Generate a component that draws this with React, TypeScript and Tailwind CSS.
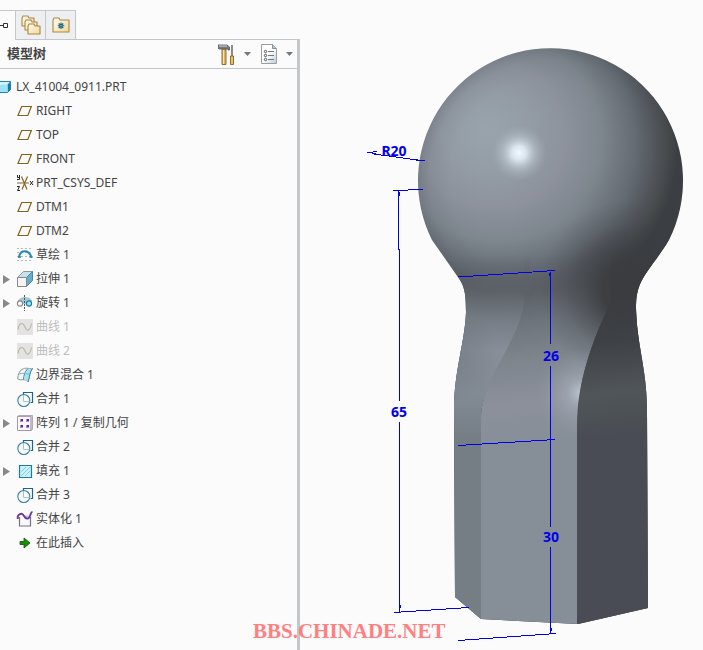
import type { ReactNode } from "react";

type IconName =
	| "plane"
	| "csys"
	| "sketch"
	| "extrude"
	| "revolve"
	| "curve"
	| "blend"
	| "merge"
	| "pattern"
	| "fill"
	| "solidify"
	| "insert";

type Feature = {
	icon: IconName;
	label: string;
	expandable?: boolean;
	suppressed?: boolean;
};

const features: Feature[] = [
	{ icon: "plane", label: "RIGHT" },
	{ icon: "plane", label: "TOP" },
	{ icon: "plane", label: "FRONT" },
	{ icon: "csys", label: "PRT_CSYS_DEF" },
	{ icon: "plane", label: "DTM1" },
	{ icon: "plane", label: "DTM2" },
	{ icon: "sketch", label: "草绘 1" },
	{ icon: "extrude", label: "拉伸 1", expandable: true },
	{ icon: "revolve", label: "旋转 1", expandable: true },
	{ icon: "curve", label: "曲线 1", suppressed: true },
	{ icon: "curve", label: "曲线 2", suppressed: true },
	{ icon: "blend", label: "边界混合 1" },
	{ icon: "merge", label: "合并 1" },
	{ icon: "pattern", label: "阵列 1 / 复制几何", expandable: true },
	{ icon: "merge", label: "合并 2" },
	{ icon: "fill", label: "填充 1", expandable: true },
	{ icon: "merge", label: "合并 3" },
	{ icon: "solidify", label: "实体化 1" },
	{ icon: "insert", label: "在此插入" },
];

const glyphs: Record<IconName, ReactNode> = {
	plane: <path d="M4.7 3.5h9.6l-3.5 9H1z" fill="none" stroke="#80601f" strokeWidth="1.2" />,
	csys: (
		<>
			<path d="M0 8h12M4.500 1.500l5.500 13M10.500 1.500l-5.500 13" stroke="#8a6428" strokeWidth="1.200" />
			<g stroke="#222" strokeWidth="1" fill="none">
				<path d="M.5 0v2.500h2M2.500 0v4.500H0M0 11.500h2.500L.5 15.500H3M13 6l3 4M16 6l-3 4" />
			</g>
		</>
	),
	sketch: (
		<>
			<path d="M.5 1.500h15M.5 5.500h15M.5 9.500h15M.5 13.500h15" stroke="#777" strokeDasharray="1 3" />
			<path d="M2 10.500C3 2 12 2 14.500 10.500" fill="none" stroke="#238bb5" strokeWidth="2" />
			<path d="M1 10h3M12.500 10h3" stroke="#238bb5" strokeWidth="1.500" />
		</>
	),
	extrude: (
		<>
			<path d="M.5 6.500L6.500.5h9l-6 6z" fill="#c5e3ed" stroke="#8b979d" />
			<path d="M9.500 6.500l6-6v9l-6 6z" fill="#65aeca" stroke="#458ba5" />
			<path d="M.5 6.500h9v9h-9z" fill="#f4f4f4" stroke="#888" />
		</>
	),
	revolve: (
		<>
			<path d="M1.500 6C3 1.500 13 1.500 14.500 6l-4 3h-5z" fill="#a7ccd8" />
			<path d="M1.500 6C3 1.500 13 1.500 14.500 6" fill="none" stroke="#9fb6be" />
			<path d="M7.500 0v16" stroke="#555" strokeDasharray="2 1" />
			<circle cx="3" cy="8.500" r="2.600" fill="#fafafa" stroke="#888" strokeWidth="1.100" />
			<circle cx="12" cy="8.500" r="2.600" fill="#8ce2f7" stroke="#177fa3" strokeWidth="1.100" />
		</>
	),
	curve: (
		<>
			<path d="M0 0h16v16H0z" fill="#e3e3e3" />
			<path d="M1 10.500C2 3 6 3 8 8s5 4 6.500-3.500" fill="none" stroke="#bdb9a0" strokeWidth="1.200" />
		</>
	),
	blend: (
		<>
			<path d="M5 2.500C9 0 11 2 15.500 1.500 12.500 5 13 9 11 15 9 11 4 14 .7 12 1 7 2 4.500 5 2.500z" fill="#eef8fb" stroke="#8d9499" />
			<path d="M11 2C8.500 5 8 8 7.500 12.500L11 15c2-6 1.500-10 4.500-13.500z" fill="#a6e2f3" />
			<path d="M15.500 1.500C12.500 5 13 9 11 15M10.500 2C7.500 5 7 8 6.500 12.500" fill="none" stroke="#2f86a8" />
			<path d="M1.500 7.500c4-2.500 7 0 11-.5" fill="none" stroke="#8aa7b2" />
		</>
	),
	merge: (
		<>
			<path d="M6.500 3.500V1.500h9v10h-2" fill="none" stroke="#176887" strokeWidth="1.200" />
			<circle cx="6.800" cy="9.500" r="6" fill="#f7fbfc" stroke="#3a7f9b" strokeWidth="1.100" />
			<path d="M6.500 4v6.500h6" fill="none" stroke="#a9c2cc" />
		</>
	),
	pattern: (
		<>
			<path d="M.5 1.500h13.500v14H.5z" fill="#faf8fc" stroke="#a29aac" />
			<path d="M.5 1.500l1.500-1h13.500v14l-1.500 1v-14z" fill="#d8d4df" stroke="#a29aac" strokeWidth="0.800" />
			<path d="M3 4h3v3H3zM9 4h3v3H9zM3 10h3v3H3zM9 10h3v3H9z" fill="#a98cc8" />
			<path d="M4 4h2v2H4zM10 4h2v2h-2zM4 10h2v2H4zM10 10h2v2h-2z" fill="#5b2a90" />
		</>
	),
	fill: (
		<>
			<path d="M2.500 2.500h12v12h-12z" fill="#c4f3fb" stroke="#23799b" strokeWidth="1.200" />
			<path d="M4 9l5-5M4 13l9-9M8 13l5-5" stroke="#83bed0" strokeWidth="0.800" />
		</>
	),
	solidify: (
		<>
			<path d="M2.500 6v9h11V6" fill="#faf8fc" stroke="#777083" strokeWidth="1.200" />
			<path d="M6 4.500h7v2c-1 3-4 2-5 0z" fill="#c8bddb" />
			<path d="M.7 8C0 3 5 1 7 5s5 3 6 0 1-4 2.500-4" fill="none" stroke="#69399a" strokeWidth="1.800" />
		</>
	),
	insert: <path d="M3 6.500h4V3l6 5-6 5V9.500H3z" fill="#149000" stroke="#0c5500" strokeWidth="0.800" />,
};

function Icon({ name }: { name: IconName }) {
	return (
		<svg viewBox="0 0 16 16" className="size-4 shrink-0 overflow-visible" aria-hidden="true">
			{glyphs[name]}
		</svg>
	);
}

function Folder({ x, y, w, h }: { x: number; y: number; w: number; h: number }) {
	return (
		<path
			d={`M${x} ${y + 2}l1-2h5l1 2h${w - 7}v${h - 2}H${x}z`}
			fill="url(#folder)"
			stroke="#a9864a"
			strokeWidth="1.100"
			strokeLinejoin="round"
		/>
	);
}

function Caret() {
	return (
		<svg viewBox="0 0 7 4" className="h-1 w-[7px]" aria-hidden="true">
			<path d="M0 0h7L3.500 4z" fill="#777" />
		</svg>
	);
}

function Tabs() {
	return (
		<div role="tablist" className="flex h-10 pt-2.5">
			<button
				type="button"
				role="tab"
				aria-selected="true"
				aria-label="模型树"
				className="flex w-4 items-center border-t border-r border-[#c3c7ca]"
			>
				<svg viewBox="0 0 10 7" className="h-[7px] w-2.5" aria-hidden="true">
					<path d="M0 3.500h3M3.500 1.500h4v4h-4z" fill="none" stroke="#333" />
				</svg>
			</button>
			<button
				type="button"
				role="tab"
				aria-selected="false"
				aria-label="文件夹浏览器"
				className="flex w-[30px] items-center justify-center border-t border-r border-b border-[#c3c7ca] bg-[#edeff1]"
			>
				<svg viewBox="0 0 20 20" className="size-5" aria-hidden="true">
					<defs>
						<linearGradient id="folder" x2="1" y2="1">
							<stop stopColor="#fffdf0" />
							<stop offset="1" stopColor="#f3d797" />
						</linearGradient>
					</defs>
					<Folder x={1} y={1} w={12} h={10} />
					<Folder x={4} y={5} w={12} h={10} />
					<Folder x={7} y={9} w={12} h={10} />
				</svg>
			</button>
			<button
				type="button"
				role="tab"
				aria-selected="false"
				aria-label="收藏夹"
				className="flex w-[30px] items-center justify-center border-t border-r border-b border-[#c3c7ca] bg-[#edeff1]"
			>
				<svg viewBox="0 0 18 16" className="h-4 w-[18px]" aria-hidden="true">
					<Folder x={1} y={1} w={16} h={14} />
					<path d="M9 5.500v6.500M5.800 8.700h6.500M6.700 6.500l4.500 4.500M11.200 6.500L6.700 11" stroke="#126382" strokeWidth="1.100" />
					<path d="M8.500 8.200h1v1h-1z" fill="#fff" />
				</svg>
			</button>
			<div className="flex-1 border-b border-[#c3c7ca]" />
		</div>
	);
}

function TreeHeader() {
	return (
		<div className="flex h-[29px] items-center border-r-3 border-b border-[#c3c7ca] pr-1 pl-[7px]">
			<h1 className="flex-1 text-[13px] font-bold">模型树</h1>
			<button type="button" aria-label="设置" className="mr-2.5 flex items-center gap-[9px]">
				<svg viewBox="0 0 17 21" className="h-[21px] w-[17px]" aria-hidden="true">
					<path d="M4 5h4v15.500H4z" fill="#dcb264" stroke="#956c2a" />
					<path d="M5.500 6v14" stroke="#f9e5ac" />
					<path d="M0 1h9l2.500 2v3H10V5H1L0 4z" fill="#777b83" stroke="#55575d" strokeWidth="0.800" />
					<path d="M1 2h8" stroke="#d5d7dc" />
					<path d="M14 1v11" stroke="#777" strokeWidth="1.700" />
					<path d="M12.500 12h3v8.500h-3z" fill="#e6c277" stroke="#956c2a" />
				</svg>
				<Caret />
			</button>
			<button type="button" aria-label="显示" className="flex items-center gap-[9px]">
				<svg viewBox="0 0 16 20" className="h-5 w-4" aria-hidden="true">
					<defs>
						<linearGradient id="sheet" x2="1" y2="1">
							<stop offset="0.500" stopColor="#fff" />
							<stop offset="1" stopColor="#b9ccd8" />
						</linearGradient>
					</defs>
					<path d="M.5.500h11l4 4v15H.5z" fill="url(#sheet)" stroke="#999fa3" />
					<path d="M11.500.500v4h4" fill="#b8c6d0" stroke="#859098" />
					<path d="M7 7.500h6M7 11.500h6M7 15.500h6" stroke="#777" />
					<g fill="#fff" stroke="#555">
						<circle cx="4.500" cy="7.500" r="1.200" />
						<circle cx="4.500" cy="11.500" r="1.200" />
						<circle cx="4.500" cy="15.500" r="1.200" />
					</g>
				</svg>
				<Caret />
			</button>
		</div>
	);
}

function FeatureRow({ feature }: { feature: Feature }) {
	return (
		<li role="treeitem" className="flex h-6 items-center">
			<div className="flex w-[17px] shrink-0 pl-[3px]">
				{feature.expandable && (
					<button type="button" aria-label={`展开 ${feature.label}`}>
						<svg viewBox="0 0 7 9" className="h-[9px] w-[7px]" aria-hidden="true">
							<path d="M0 0l7 4.500L0 9z" fill="#898989" />
						</svg>
					</button>
				)}
			</div>
			<Icon name={feature.icon} />
			<span className={feature.suppressed ? "pl-[3px] text-[#bdbdbd]" : "pl-[3px]"}>{feature.label}</span>
		</li>
	);
}

function ModelTree() {
	return (
		<aside className="flex w-[300px] shrink-0 flex-col">
			<Tabs />
			<TreeHeader />
			<ul role="tree" aria-label="模型树" className="flex-1 border-r-3 border-[#c3c7ca] pt-1.5 text-xs">
				<li role="treeitem" className="flex h-6 items-center gap-[5px]">
					<svg viewBox="0 0 11 12" className="h-3 w-[11px]" aria-hidden="true">
						<path d="M0 .5h10.500l-3 3H0z" fill="#d0f4fc" />
						<path d="M7.500 3.500l3-3v8l-3 3z" fill="#147ca6" />
						<path d="M0 3.500h7.500v8H0z" fill="#9be4f8" />
						<path d="M0 .5h10.500v8l-3 3H0" fill="none" stroke="#2384a9" />
					</svg>
					<span>LX_41004_0911.PRT</span>
				</li>
				{features.map((feature) => (
					<FeatureRow key={feature.label} feature={feature} />
				))}
			</ul>
		</aside>
	);
}

const silhouette =
	"M432 240A132.500 132.500 0 1 1 669 240C656 262 643 273 638 290C635 301 636 312 637 325C640 354 647 376 647 410L648 608L578 624L481 619L455 597L454 410C454 371 465 342 466 312C466 291 464 286 458 277Z";

function SolidModel() {
	return (
		<g>
			<defs>
				<clipPath id="solid">
					<path d={silhouette} />
				</clipPath>
				<radialGradient id="ball" gradientUnits="userSpaceOnUse" cx="508" cy="145" r="170" fx="485" fy="130">
					<stop offset="0" stopColor="#98a4ac" />
					<stop offset="0.220" stopColor="#949da6" />
					<stop offset="0.420" stopColor="#8d929d" />
					<stop offset="0.600" stopColor="#7e868e" />
					<stop offset="0.780" stopColor="#646b72" />
					<stop offset="0.870" stopColor="#54585f" />
					<stop offset="0.940" stopColor="#484c4e" />
					<stop offset="1" stopColor="#3b3e42" />
				</radialGradient>
				<radialGradient id="rim" gradientUnits="userSpaceOnUse" cx="550" cy="181" r="134">
					<stop offset="0.750" stopColor="#3b4248" stopOpacity="0" />
					<stop offset="0.900" stopColor="#3b4248" stopOpacity="0.060" />
					<stop offset="1" stopColor="#3b4248" stopOpacity="0.220" />
				</radialGradient>
				<radialGradient id="glint" gradientUnits="userSpaceOnUse" cx="519" cy="153" r="28">
					<stop offset="0" stopColor="#f0f9ff" />
					<stop offset="0.250" stopColor="#e3edf6" stopOpacity="0.900" />
					<stop offset="0.600" stopColor="#bdc8d2" stopOpacity="0.500" />
					<stop offset="1" stopColor="#a5afb8" stopOpacity="0" />
				</radialGradient>
				<linearGradient id="left" gradientUnits="userSpaceOnUse" x1="0" y1="255" x2="0" y2="440">
					<stop offset="0" stopColor="#5d6268" stopOpacity="0" />
					<stop offset="0.200" stopColor="#5d6268" />
					<stop offset="0.350" stopColor="#757c84" />
					<stop offset="0.520" stopColor="#898f9a" />
					<stop offset="0.750" stopColor="#828a93" />
					<stop offset="1" stopColor="#757e85" />
				</linearGradient>
				<radialGradient id="leftShade" gradientUnits="userSpaceOnUse" cx="450" cy="355" r="48">
					<stop offset="0" stopColor="#687178" stopOpacity="0.550" />
					<stop offset="1" stopColor="#687178" stopOpacity="0" />
				</radialGradient>
				<linearGradient id="front" gradientUnits="userSpaceOnUse" x1="543" y1="255" x2="562" y2="440">
					<stop offset="0" stopColor="#5d6268" stopOpacity="0" />
					<stop offset="0.200" stopColor="#5c6167" />
					<stop offset="0.350" stopColor="#6d747b" />
					<stop offset="0.550" stopColor="#7e858d" />
					<stop offset="0.780" stopColor="#8c909b" />
					<stop offset="1" stopColor="#868f98" />
				</linearGradient>
				<radialGradient id="neckShade" gradientUnits="userSpaceOnUse" cx="630" cy="290" r="90">
					<stop offset="0" stopColor="#3a3c40" />
					<stop offset="0.300" stopColor="#3a3c40" stopOpacity="0.950" />
					<stop offset="0.500" stopColor="#3a3c40" stopOpacity="0.550" />
					<stop offset="0.750" stopColor="#3a3c40" stopOpacity="0.180" />
					<stop offset="1" stopColor="#3a3c40" stopOpacity="0" />
				</radialGradient>
				<radialGradient id="edgeGlint" gradientUnits="userSpaceOnUse" cx="581" cy="393" r="45">
					<stop offset="0" stopColor="#bcc6d1" />
					<stop offset="0.300" stopColor="#a8b1bc" stopOpacity="0.600" />
					<stop offset="1" stopColor="#8f98a2" stopOpacity="0" />
				</radialGradient>
				<linearGradient id="right" gradientUnits="userSpaceOnUse" x1="608" y1="310" x2="622" y2="435">
					<stop offset="0" stopColor="#3b3d41" />
					<stop offset="0.250" stopColor="#3e4145" />
					<stop offset="0.650" stopColor="#50555a" />
					<stop offset="0.850" stopColor="#4c5155" />
					<stop offset="1" stopColor="#4a4c55" />
				</linearGradient>
			</defs>
			<g clipPath="url(#solid)">
				<path d="M400 30h300v610H400z" fill="url(#ball)" />
				<path d="M400 30h300v610H400z" fill="url(#rim)" />
				<circle cx="519" cy="153" r="28" fill="url(#glint)" />
				<path d="M440 250H530V305C525 342 481 380 481 418V630H440z" fill="url(#left)" />
				<path d="M440 300H525C517 344 481 380 481 418V435H440z" fill="url(#leftShade)" />
				<path d="M524 250V302C520 340 481 380 481 418V630H578V425C577 385 590 345 611 302V250z" fill="url(#front)" />
				<path d="M530 190H730V390H530z" fill="url(#neckShade)" />
				<path d="M524 302V450H578V425C577 385 590 345 611 302z" fill="url(#edgeGlint)" />
				<path d="M611 302C590 345 577 385 577 425V625H660V302z" fill="url(#right)" />
			</g>
		</g>
	);
}

function Dimensions() {
	return (
		<g>
			<g fill="none" stroke="#0000ee" shapeRendering="crispEdges">
				<path d="M393 190.500L423 189.500M398.500 190V250M399.500 249V401M399.500 422V612M394 612.500L469 607.500" />
				<path d="M458 277L555 270.500M458 445.500L555 439.500M458 640.500L556 633.500" />
				<path d="M550.500 272V344M550.500 366V527M550.500 547V634" />
				<path d="M367 152.500L376 153.500M374 154L425 161M369 152.500L377 151.500M416 160.500L424 160.500" />
				<path d="M399.500 192v4M549.500 273v3M551.500 628v3M400.500 605v3" />
			</g>
			<g fill="#0000ee" fontSize="14" fontWeight="700" textAnchor="middle" fontFamily="'Noto Sans', sans-serif">
				<text x="394" y="156">R20</text>
				<text x="399" y="417">65</text>
				<text x="551" y="361">26</text>
				<text x="551" y="542">30</text>
			</g>
		</g>
	);
}

export default function App() {
	return (
		<div className="relative flex min-h-screen bg-[#fbfbfb] font-['Noto_Sans','Noto_Sans_CJK_SC',sans-serif] text-[#444]">
			<ModelTree />
			<main className="min-w-0 flex-1">
				<svg viewBox="300 0 403 650" className="block w-full" role="img" aria-label="LX_41004_0911">
					<SolidModel />
					<Dimensions />
				</svg>
			</main>
			<p className="absolute top-[618px] left-[253px] font-['Liberation_Serif',serif] text-[21px] leading-[26px] font-bold text-[#ff8080]">
				BBS.CHINADE.NET
			</p>
		</div>
	);
}
